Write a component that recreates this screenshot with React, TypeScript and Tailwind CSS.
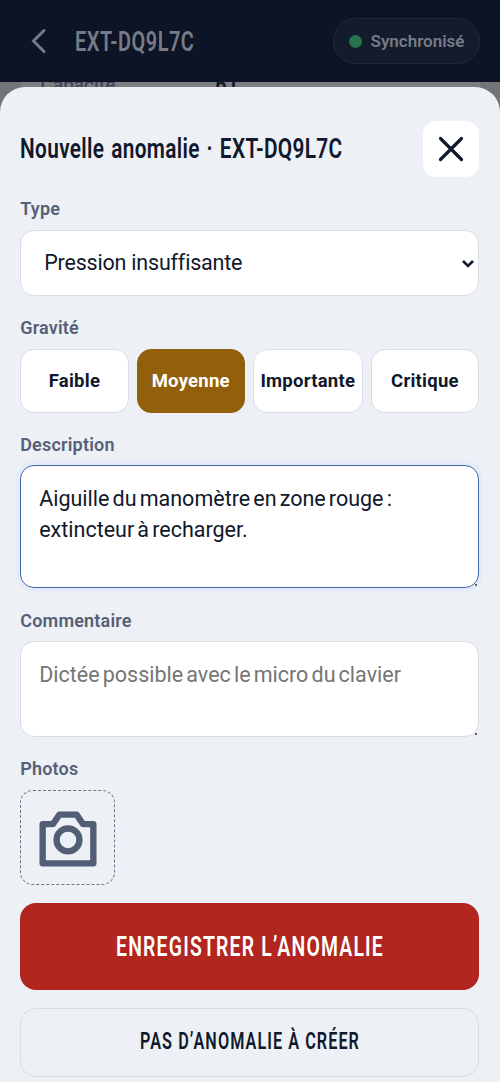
import React from 'react';

const severities = ['Faible', 'Moyenne', 'Importante', 'Critique'];

interface FieldLabelProps {
  children: React.ReactNode;
  htmlFor?: string;
  className?: string;
}

function FieldLabel({ children, htmlFor, className = '' }: FieldLabelProps) {
  return (
    <label
      htmlFor={htmlFor}
      className={`block h-[22px] whitespace-nowrap text-[18px] leading-[22px] font-semibold tracking-[0.2px] text-[#566078] ${className}`}
    >
      {children}
    </label>
  );
}

interface NoteFieldProps {
  id: string;
  className: string;
  defaultValue?: string;
  placeholder?: string;
}

function NoteField({ id, className, defaultValue, placeholder }: NoteFieldProps) {
  return (
    <div className="relative mt-[9px] shrink-0">
      <textarea
        id={id}
        className={`block w-full resize-none rounded-[14px] border bg-white px-[18px] py-[17px] text-[21.5px] leading-[31px] [word-spacing:-2.2px] outline-none placeholder:text-[#757575] ${className}`}
        defaultValue={defaultValue}
        placeholder={placeholder}
      />
      <span className="absolute right-[2px] bottom-[2px] h-[2px] w-[2px] bg-[#60646e]" />
    </div>
  );
}

function CameraIcon() {
  return (
    <svg
      className="h-[76px] w-[76px]"
      viewBox="0 0 24 24"
      fill="none"
      stroke="currentColor"
      strokeWidth="2"
      strokeLinejoin="round"
    >
      <path d="M4 7.6h3.3l2-3h5.4l2 3H20v12.4H4z" />
      <circle cx="12" cy="12.6" r="3.6" />
    </svg>
  );
}

function AppHeader() {
  return (
    <header className="relative z-10 flex h-[82px] items-center bg-[#0d1425] pr-[20.5px] pl-[30px] text-[#777b85]">
      <svg className="h-[26px] w-[18px]" viewBox="0 0 18 26" fill="none" stroke="currentColor" strokeWidth="3" strokeLinecap="round">
        <path d="M14 2.5L3.5 13 14 23.5" />
      </svg>
      <h1 className="mt-[2px] ml-[27px] w-[120px] whitespace-nowrap text-[27.5px] leading-none font-semibold">
        <span className="inline-block origin-left scale-x-[.725] tracking-[0.7px]">EXT-DQ9L7C</span>
      </h1>
      <div className="ml-auto flex h-[46px] w-[147px] items-center rounded-full border border-[#202a3b] bg-[#131c2d] pl-[15px]">
        <span className="h-[13px] w-[13px] rounded-full bg-[#26734d]" />
        <span className="mt-[1px] ml-[9px] text-[17px] font-semibold">Synchronisé</span>
      </div>
    </header>
  );
}

export default function App() {
  return (
    <div className="relative h-[1082px] w-[500px] overflow-hidden bg-[#727477] font-['Roboto',sans-serif] text-[#10182b]">
      <AppHeader />
      <div className="mx-[20.5px] flex h-[20px] bg-[#7c7f82] pl-[20px] text-[19px] leading-[20px]">
        <span className="-mt-[7px] w-[175px] font-medium text-[#3f465a]">Capacité</span>
        <span className="-mt-[7px] font-bold">6 l</span>
      </div>

      <section className="relative -mt-[15px] flex h-[995px] flex-col rounded-t-[25px] bg-[#edf0f5] pt-[34px] pr-[20.8px] pl-[20.2px]">
        <div className="flex h-[56px] shrink-0 items-center justify-between">
          <h2 className="w-[322px] text-[27.5px] leading-none font-semibold whitespace-nowrap">
            <span className="inline-block origin-left scale-x-[.757] tracking-[0.45px] [word-spacing:1.7px]">Nouvelle anomalie · EXT-DQ9L7C</span>
          </h2>
          <button type="button" aria-label="Fermer" className="flex h-[56px] w-[56px] shrink-0 items-center justify-center rounded-[13px] bg-white">
            <svg className="h-[28px] w-[28px]" viewBox="0 0 28 28" fill="none" stroke="currentColor" strokeWidth="3.2" strokeLinecap="round">
              <path d="M3.5 3.5l21 21M24.5 3.5l-21 21" />
            </svg>
          </button>
        </div>

        <FieldLabel htmlFor="type" className="mt-[21px]">Type</FieldLabel>
        <div className="relative mt-[10px] shrink-0">
          <select
            id="type"
            className="block h-[66px] w-full appearance-none rounded-[14px] border border-[#d9dde5] bg-white pl-[23px] text-[21.5px] tracking-[-0.2px]"
          >
            <option>Pression insuffisante</option>
          </select>
          <svg className="pointer-events-none absolute top-[29px] right-[4.5px] h-[10px] w-[14px]" viewBox="0 0 14 10" fill="none" stroke="currentColor" strokeWidth="2.6">
            <path d="M2 2l5 5 5-5" />
          </svg>
        </div>

        <FieldLabel className="mt-[21px]">Gravité</FieldLabel>
        <div className="mt-[10px] grid h-[64px] shrink-0 grid-cols-[108.5px_108.5px_110px_108.5px] justify-between">
          {severities.map((severity) => (
            <button
              key={severity}
              type="button"
              className={`rounded-[14px] border text-[18.5px] leading-[24px] font-bold tracking-[0.25px] ${
                severity === 'Moyenne'
                  ? 'border-[#925f0a] bg-[#925f0a] text-white'
                  : 'border-[#d9dde5] bg-white'
              }`}
            >
              {severity}
            </button>
          ))}
        </div>

        <FieldLabel htmlFor="description" className="mt-[21px]">Description</FieldLabel>
        <NoteField
          id="description"
          className="h-[123px] border-[#3f66ad] shadow-[0_0_0_4px_#e5ecf8]"
          defaultValue="Aiguille du manomètre en zone rouge : extincteur à recharger."
        />

        <FieldLabel htmlFor="commentaire" className="mt-[22px]">Commentaire</FieldLabel>
        <NoteField
          id="commentaire"
          className="h-[96px] border-[#d9dde5]"
          placeholder="Dictée possible avec le micro du clavier"
        />

        <FieldLabel className="mt-[21px]">Photos</FieldLabel>
        <button
          type="button"
          aria-label="Ajouter une photo"
          className="mt-[10px] flex h-[95px] w-[95px] shrink-0 items-center justify-center rounded-[13px] border border-dashed border-[#6b7489] text-[#525e76]"
        >
          <CameraIcon />
        </button>

        <button type="button" className="mt-[18px] h-[87px] w-full shrink-0 rounded-[16px] bg-[#b1261e] pt-[1px] text-[27.5px] font-semibold text-white">
          <span className="inline-block scale-x-[.705] whitespace-nowrap tracking-[1.7px]">ENREGISTRER L’ANOMALIE</span>
        </button>
        <button type="button" className="mt-[18px] h-[69px] w-full shrink-0 rounded-[16px] border border-[#d9dde5] text-[23px] font-semibold">
          <span className="inline-block scale-x-[.705] whitespace-nowrap tracking-[1.5px]">PAS D’ANOMALIE À CRÉER</span>
        </button>
      </section>
    </div>
  );
}
